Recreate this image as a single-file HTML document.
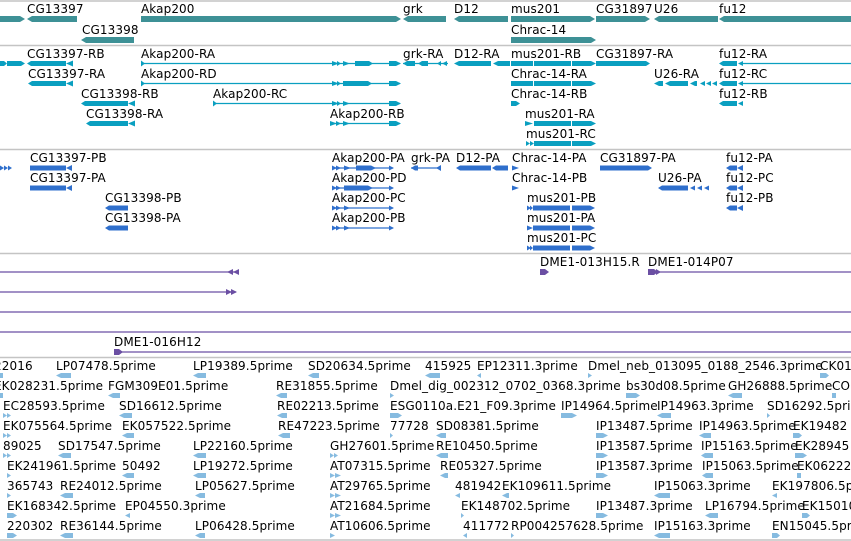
<!DOCTYPE html>
<html><head><meta charset="utf-8"><style>
html,body{margin:0;padding:0;background:#fff;width:851px;height:541px;overflow:hidden}
svg{display:block}
text{font-family:"DejaVu Sans","Liberation Sans",sans-serif;font-size:12px;letter-spacing:0.1px;fill:#000}
</style></head><body>
<svg width="851" height="541" viewBox="0 0 851 541" xmlns="http://www.w3.org/2000/svg">
<g stroke="#c4c4c4" stroke-width="1.5">
<line x1="0" y1="1" x2="851" y2="1"/><line x1="0" y1="45.5" x2="851" y2="45.5"/>
<line x1="0" y1="149.5" x2="851" y2="149.5"/><line x1="0" y1="253.5" x2="851" y2="253.5"/>
<line x1="0" y1="357.5" x2="851" y2="357.5"/><line x1="0" y1="540" x2="851" y2="540"/>
</g>

<g>
<text x="27" y="13">CG13397</text><text x="141" y="13">Akap200</text><text x="403" y="13">grk</text>
<text x="454" y="13">D12</text><text x="511" y="13">mus201</text><text x="596" y="13">CG31897</text>
<text x="654" y="13">U26</text><text x="719" y="13">fu12</text>
<text x="82" y="34">CG13398</text><text x="511" y="34">Chrac-14</text>
</g>
<g fill="#3e9196">
<polygon points="0,16 20,16 25,19 20,22 0,22"/>
<polygon points="27,19 32,16 77,16 77,22 32,22"/>
<polygon points="141,16 396,16 401,19 396,22 141,22"/>
<polygon points="403,19 408,16 446,16 446,22 408,22"/>
<polygon points="454,19 459,16 508,16 508,22 459,22"/>
<polygon points="511,16 590,16 595,19 590,22 511,22"/>
<polygon points="596,16 645,16 650,19 645,22 596,22"/>
<polygon points="654,19 659,16 718,16 718,22 659,22"/>
<polygon points="719,19 724,16 851,16 851,22 724,22"/>
<polygon points="81,40 86,37 134,37 134,43 86,43"/>
<polygon points="511,37 591,37 596,40 591,43 511,43"/>
</g>

<g>
<text x="27" y="58">CG13397-RB</text><text x="141" y="58">Akap200-RA</text><text x="403" y="58">grk-RA</text>
<text x="454" y="58">D12-RA</text><text x="511" y="58">mus201-RB</text><text x="596" y="58">CG31897-RA</text><text x="719" y="58">fu12-RA</text>
<text x="28" y="78">CG13397-RA</text><text x="141" y="78">Akap200-RD</text><text x="511" y="78">Chrac-14-RA</text><text x="654" y="78">U26-RA</text><text x="719" y="78">fu12-RC</text>
<text x="81" y="98">CG13398-RB</text><text x="213" y="98">Akap200-RC</text><text x="511" y="98">Chrac-14-RB</text><text x="719" y="98">fu12-RB</text>
<text x="86" y="118">CG13398-RA</text><text x="330" y="118">Akap200-RB</text><text x="525" y="118">mus201-RA</text>
<text x="526" y="138">mus201-RC</text>
</g>
<g stroke="#0a9fc0" stroke-width="1.2">
<line x1="141" y1="63.5" x2="400" y2="63.5"/><line x1="141" y1="83.5" x2="400" y2="83.5"/>
<line x1="213" y1="103.5" x2="400" y2="103.5"/><line x1="330" y1="123.5" x2="400" y2="123.5"/>
<line x1="403" y1="63.5" x2="448" y2="63.5"/>
<line x1="740" y1="63.5" x2="851" y2="63.5"/><line x1="740" y1="83.5" x2="851" y2="83.5"/>
</g>
<g fill="#0a9fc0">
<polygon points="0,61 4,61 7,63.5 4,66 0,66"/><polygon points="7,61 21,61 25,63.5 21,66 7,66"/>
<polygon points="27,63.5 31,61 66,61 66,66 31,66"/><polygon points="66,63.5 73,60.5 73,66.5"/>
<polygon points="141,60.5 145,63.5 141,66.5"/>
<polygon points="332,61 339,63.5 332,66 "/><polygon points="337,61 341,63.5 337,66"/><polygon points="343,61 350,63.5 343,66"/>
<polygon points="355,61 369,61 373,63.5 369,66 355,66"/><polygon points="389,61 396,61 401,63.5 396,66 389,66"/>
<polygon points="403,63.5 407,61 415,61 415,66 407,66"/><polygon points="418,63.5 422,61 428,61 428,66 422,66"/>
<polygon points="437,63.5 441,61 441,66"/><polygon points="442,63.5 447,61 447,66"/>
<polygon points="454,63.5 459,61 491,61 491,66 459,66"/><polygon points="493,63.5 498,61 510,61 510,66 498,66"/>
<rect x="511" y="61" width="22" height="5"/><rect x="534" y="61" width="37" height="5"/><polygon points="572,61 591,61 596,63.5 591,66 572,66"/>
<polygon points="596,61 646,61 650,63.5 646,66 596,66"/>
<polygon points="719,63.5 723,61 737,61 737,66 723,66"/><polygon points="738,63.5 743,61 743,66"/>
<polygon points="28,83.5 32,81 66,81 66,86 32,86"/><polygon points="66,83.5 73,80.5 73,86.5"/>
<polygon points="141,80.5 145,83.5 141,86.5"/>
<polygon points="332,81 339,83.5 332,86"/><polygon points="337,81 341,83.5 337,86"/>
<polygon points="343,81 368,81 372,83.5 368,86 343,86"/><polygon points="389,81 396,81 401,83.5 396,86 389,86"/>
<rect x="511" y="81" width="22" height="5"/><rect x="534" y="81" width="37" height="5"/><polygon points="572,81 591,81 596,83.5 591,86 572,86"/>
<polygon points="654,83.5 659,81 663,81 663,86 659,86"/><polygon points="665,83.5 670,81 688,81 688,86 670,86"/>
<polygon points="690,83.5 695,81 697,81 697,86 695,86"/><polygon points="700,83.5 705,81 705,86"/><polygon points="706,83.5 711,81 711,86"/><polygon points="712,83.5 717,81 717,86"/>
<polygon points="719,83.5 723,81 737,81 737,86 723,86"/><polygon points="738,83.5 743,81 743,86"/>
<polygon points="81,103.5 85,101 128,101 128,106 85,106"/><polygon points="128,103.5 135,100.5 135,106.5"/>
<polygon points="213,100.5 217,103.5 213,106.5"/>
<polygon points="332,101 339,103.5 332,106"/><polygon points="337,101 341,103.5 337,106"/><polygon points="343,101 350,103.5 343,106"/>
<polygon points="389,101 396,101 401,103.5 396,106 389,106"/>
<polygon points="511,101 516,101 520,103.5 516,106 511,106"/>
<polygon points="719,103.5 723,101 737,101 737,106 723,106"/><polygon points="738,103.5 743,101 743,106"/>
<polygon points="86,123.5 90,121 128,121 128,126 90,126"/><polygon points="128,123.5 135,120.5 135,126.5"/>
<polygon points="330,121 337,123.5 330,126"/><polygon points="336,121 341,123.5 336,126"/><polygon points="343,121 350,123.5 343,126"/>
<polygon points="389,121 396,121 401,123.5 396,126 389,126"/>
<polygon points="525,121 533,123.5 525,126"/><rect x="534" y="121" width="37" height="5"/><polygon points="572,121 591,121 596,123.5 591,126 572,126"/>
<polygon points="526,141 530,143.5 526,146"/><polygon points="530,141 534,143.5 530,146"/><rect x="534" y="141" width="37" height="5"/><polygon points="572,141 591,141 596,143.5 591,146 572,146"/>
</g>

<g>
<text x="30" y="162">CG13397-PB</text><text x="332" y="162">Akap200-PA</text><text x="411" y="162">grk-PA</text>
<text x="456" y="162">D12-PA</text><text x="512" y="162">Chrac-14-PA</text><text x="600" y="162">CG31897-PA</text><text x="726" y="162">fu12-PA</text>
<text x="30" y="182">CG13397-PA</text><text x="332" y="182">Akap200-PD</text><text x="512" y="182">Chrac-14-PB</text><text x="658" y="182">U26-PA</text><text x="726" y="182">fu12-PC</text>
<text x="105" y="202">CG13398-PB</text><text x="332" y="202">Akap200-PC</text><text x="527" y="202">mus201-PB</text><text x="726" y="202">fu12-PB</text>
<text x="105" y="222">CG13398-PA</text><text x="332" y="222">Akap200-PB</text><text x="527" y="222">mus201-PA</text>
<text x="527" y="242">mus201-PC</text>
</g>
<g stroke="#2f6fcc" stroke-width="1.2">
<line x1="332" y1="168" x2="393" y2="168"/><line x1="332" y1="188" x2="393" y2="188"/>
<line x1="332" y1="208" x2="393" y2="208"/><line x1="332" y1="228" x2="393" y2="228"/>
<line x1="411" y1="168" x2="440" y2="168"/>
</g>
<g fill="#2f6fcc">
<polygon points="0,165.5 4,168 0,170.5"/><polygon points="4,165.5 8,168 4,170.5"/><polygon points="8,165.5 12,168 8,170.5"/>
<polygon points="30,165.5 66,165.5 66,170.5 30,170.5"/><polygon points="66,168 72,165 72,171"/>
<polygon points="30,185.5 66,185.5 66,190.5 30,190.5"/><polygon points="66,188 72,185 72,191"/>
<polygon points="105,208 109,205.5 128,205.5 128,210.5 109,210.5"/>
<polygon points="105,228 109,225.5 128,225.5 128,230.5 109,230.5"/>
<polygon points="332,165.5 337,168 332,170.5"/><polygon points="336,165.5 341,168 336,170.5"/><polygon points="344,165.5 351,168 344,170.5"/>
<polygon points="356,165.5 371,165.5 376,168 371,170.5 356,170.5"/><polygon points="389,165.5 394,168 389,170.5"/>
<polygon points="332,185.5 337,188 332,190.5"/><polygon points="336,185.5 341,188 336,190.5"/>
<polygon points="344,185.5 368,185.5 373,188 368,190.5 344,190.5"/><polygon points="389,185.5 394,188 389,190.5"/>
<polygon points="332,205.5 337,208 332,210.5"/><polygon points="336,205.5 341,208 336,210.5"/><polygon points="344,205.5 350,208 344,210.5"/><polygon points="389,205.5 394,208 389,210.5"/>
<polygon points="332,225.5 337,228 332,230.5"/><polygon points="336,225.5 341,228 336,230.5"/><polygon points="344,225.5 350,228 344,230.5"/><polygon points="389,225.5 394,228 389,230.5"/>
<polygon points="411,168 415,165.5 418,165.5 418,170.5 415,170.5"/><polygon points="436,168 441,165 441,171"/>
<polygon points="456,168 460,165.5 491,165.5 491,170.5 460,170.5"/><polygon points="492,168 496,165.5 508,165.5 508,170.5 496,170.5"/>
<polygon points="512,165.5 519,168 512,170.5"/><polygon points="512,185.5 519,188 512,190.5"/>
<polygon points="600,165.5 648,165.5 652,168 648,170.5 600,170.5"/>
<polygon points="658,188 662,185.5 688,185.5 688,190.5 662,190.5"/><polygon points="690,188 695,185.5 695,190.5"/><polygon points="697,188 702,185.5 702,190.5"/><polygon points="704,188 709,185.5 709,190.5"/>
<polygon points="726,168 730,165.5 737,165.5 737,170.5 730,170.5"/><polygon points="737,168 743,165 743,171"/>
<polygon points="726,188 730,185.5 737,185.5 737,190.5 730,190.5"/><polygon points="737,188 743,185 743,191"/>
<polygon points="726,208 730,205.5 737,205.5 737,210.5 730,210.5"/><polygon points="737,208 743,205 743,211"/>
<polygon points="527,205.5 531,208 527,210.5"/><polygon points="530,205.5 533,208 530,210.5"/><rect x="533" y="205.5" width="37" height="5"/><polygon points="572,205.5 590,205.5 595,208 590,210.5 572,210.5"/>
<polygon points="527,225.5 533,228 527,230.5"/><rect x="533" y="225.5" width="37" height="5"/><polygon points="572,225.5 590,225.5 595,228 590,230.5 572,230.5"/>
<polygon points="527,245.5 531,248 527,250.5"/><polygon points="530,245.5 533,248 530,250.5"/><rect x="533" y="245.5" width="37" height="5"/><polygon points="572,245.5 590,245.5 595,248 590,250.5 572,250.5"/>
</g>

<g stroke="#6b4fa3" stroke-width="1.2">
<line x1="0" y1="272" x2="236" y2="272"/><line x1="0" y1="292" x2="236" y2="292"/>
<line x1="0" y1="312" x2="851" y2="312"/><line x1="0" y1="332" x2="851" y2="332"/>
<line x1="650" y1="272" x2="851" y2="272"/><line x1="114" y1="352" x2="851" y2="352"/>
</g>
<g fill="#6b4fa3">
<polygon points="227,272 233,269 233,275"/><polygon points="233,272 239,269 239,275"/>
<polygon points="226,289 232,292 226,295"/><polygon points="231,289 237,292 231,295"/>
<polygon points="540,269 545,269 549,272 545,275 540,275"/>
<polygon points="648,269 654,269 658,272 654,275 648,275"/><polygon points="656,269 661,272 656,275"/>
<polygon points="114,349 119,349 123,352 119,355 114,355"/>
</g>
<text x="540" y="266">DME1-013H15.R</text><text x="648" y="266">DME1-014P07</text>
<text x="114" y="346">DME1-016H12</text>

<g>
<text x="-6" y="370">22016</text><text x="56" y="370">LP07478.5prime</text><text x="193" y="370">LP19389.5prime</text><text x="308" y="370">SD20634.5prime</text><text x="425" y="370">415925</text><text x="477" y="370">EP12311.3prime</text><text x="588" y="370">Dmel_neb_013095_0188_2546.3prime</text><text x="820" y="370">CK01</text>
<text x="-6" y="390">EK028231.5prime</text><text x="108" y="390">FGM309E01.5prime</text><text x="276" y="390">RE31855.5prime</text><text x="390" y="390">Dmel_dig_002312_0702_0368.3prime</text><text x="626" y="390">bs30d08.5prime</text><text x="728" y="390">GH26888.5prime</text><text x="832" y="390">CO</text>
<text x="3" y="410">EC28593.5prime</text><text x="119" y="410">SD16612.5prime</text><text x="277" y="410">RE02213.5prime</text><text x="390" y="410">ESG0110a.E21_F09.3prime</text><text x="561" y="410">IP14964.5prime</text><text x="657" y="410">IP14963.3prime</text><text x="767" y="410">SD16292.5prime</text>
<text x="3" y="430">EK075564.5prime</text><text x="122" y="430">EK057522.5prime</text><text x="278" y="430">RE47223.5prime</text><text x="390" y="430">77728</text><text x="436" y="430">SD08381.5prime</text><text x="596" y="430">IP13487.5prime</text><text x="699" y="430">IP14963.5prime</text><text x="793" y="430">EK19482</text>
<text x="3" y="450">89025</text><text x="58" y="450">SD17547.5prime</text><text x="193" y="450">LP22160.5prime</text><text x="330" y="450">GH27601.5prime</text><text x="436" y="450">RE10450.5prime</text><text x="596" y="450">IP13587.5prime</text><text x="701" y="450">IP15163.5prime</text><text x="795" y="450">EK28945</text>
<text x="7" y="470">EK241961.5prime</text><text x="122" y="470">50492</text><text x="193" y="470">LP19272.5prime</text><text x="330" y="470">AT07315.5prime</text><text x="440" y="470">RE05327.5prime</text><text x="596" y="470">IP13587.3prime</text><text x="702" y="470">IP15063.5prime</text><text x="797" y="470">EK06222</text>
<text x="7" y="490">365743</text><text x="60" y="490">RE24012.5prime</text><text x="195" y="490">LP05627.5prime</text><text x="330" y="490">AT29765.5prime</text><text x="455" y="490">481942</text><text x="502" y="490">EK109611.5prime</text><text x="654" y="490">IP15063.3prime</text><text x="772" y="490">EK197806.5prime</text>
<text x="7" y="510">EK168342.5prime</text><text x="125" y="510">EP04550.3prime</text><text x="330" y="510">AT21684.5prime</text><text x="461" y="510">EK148702.5prime</text><text x="596" y="510">IP13487.3prime</text><text x="705" y="510">LP16794.5prime</text><text x="802" y="510">EK15010</text>
<text x="7" y="530">220302</text><text x="60" y="530">RE36144.5prime</text><text x="195" y="530">LP06428.5prime</text><text x="330" y="530">AT10606.5prime</text><text x="463" y="530">411772</text><text x="511" y="530">RP004257628.5prime</text><text x="654" y="530">IP15163.3prime</text><text x="772" y="530">EN15045.5prime</text>
</g>
<g fill="#86bbe0">
<rect x="0" y="373" width="3" height="5"/><polygon points="56,375.5 61,373 71,373 71,378 61,378"/><polygon points="193,375.5 198,373 206,373 206,378 198,378"/><polygon points="308,375.5 313,373 319,373 319,378 313,378"/><polygon points="425,375.5 430,373 440,373 440,378 430,378"/><polygon points="477,375.5 481,373 481,378"/><polygon points="588,373 592,375.5 588,378"/><polygon points="820,373 826,373 829,375.5 826,378 820,378"/>
<rect x="0" y="393" width="3" height="5"/><polygon points="108,395.5 113,393 120,393 120,398 113,398"/><polygon points="276,395.5 281,393 287,393 287,398 281,398"/><polygon points="390,393 394,395.5 390,398"/><polygon points="626,393 636,393 640,395.5 636,398 626,398"/><polygon points="728,395.5 733,393 742,393 742,398 733,398"/><rect x="832" y="393" width="4" height="5"/>
<polygon points="3,413 7,415.5 3,418"/><polygon points="7,413 11,415.5 7,418"/><polygon points="119,415.5 124,413 132,413 132,418 124,418"/><polygon points="277,415.5 282,413 287,413 287,418 282,418"/><polygon points="390,413 398,413 402,415.5 398,418 390,418"/><polygon points="561,413 572,413 577,415.5 572,418 561,418"/><polygon points="657,415.5 662,413 671,413 671,418 662,418"/><polygon points="767,413 770,415.5 767,418"/>
<polygon points="3,433 7,435.5 3,438"/><polygon points="7,433 11,435.5 7,438"/><polygon points="122,435.5 127,433 134,433 134,438 127,438"/><polygon points="278,435.5 283,433 290,433 290,438 283,438"/><polygon points="390,433 393,435.5 390,438"/><polygon points="436,435.5 441,433 446,433 446,438 441,438"/><polygon points="596,433 603,433 608,435.5 603,438 596,438"/><polygon points="699,435.5 704,433 711,433 711,438 704,438"/><polygon points="793,433 799,433 802,435.5 799,438 793,438"/>
<polygon points="3,453 7,455.5 3,458"/><polygon points="7,453 11,455.5 7,458"/><polygon points="58,455.5 63,453 71,453 71,458 63,458"/><polygon points="193,455.5 198,453 206,453 206,458 198,458"/><polygon points="330,453 334,455.5 330,458"/><polygon points="334,453 338,455.5 334,458"/><polygon points="436,455.5 441,453 448,453 448,458 441,458"/><polygon points="596,453 603,453 608,455.5 603,458 596,458"/><polygon points="701,455.5 705,453 713,453 713,458 705,458"/><polygon points="795,453 803,453 807,455.5 803,458 795,458"/>
<polygon points="7,473 11,475.5 7,478"/><polygon points="122,475.5 127,473 134,473 134,478 127,478"/><polygon points="193,475.5 198,473 206,473 206,478 198,478"/><polygon points="330,473 335,475.5 330,478"/><polygon points="335,473 341,475.5 335,478"/><polygon points="440,475.5 445,473 448,473 448,478 445,478"/><polygon points="596,473 603,473 608,475.5 603,478 596,478"/><polygon points="702,475.5 706,473 713,473 713,478 706,478"/><polygon points="797,473 801,473 801,478 797,478"/>
<polygon points="7,493 11,495.5 7,498"/><polygon points="60,495.5 65,493 73,493 73,498 65,498"/><polygon points="195,495.5 200,493 205,493 205,498 200,498"/><polygon points="330,493 335,495.5 330,498"/><polygon points="335,493 341,495.5 335,498"/><polygon points="455,495.5 460,493 460,498"/><polygon points="502,495.5 507,493 509,493 509,498 507,498"/><polygon points="654,495.5 659,493 670,493 670,498 659,498"/><polygon points="772,495.5 777,493 777,498"/>
<polygon points="7,513 13,513 17,515.5 13,518 7,518"/><polygon points="125,515.5 130,513 130,518"/><polygon points="330,513 335,515.5 330,518"/><polygon points="335,513 341,515.5 335,518"/><polygon points="461,513 464,515.5 461,518"/><polygon points="596,513 603,513 608,515.5 603,518 596,518"/><polygon points="705,515.5 710,513 718,513 718,518 710,518"/><polygon points="802,513 807,513 810,515.5 807,518 802,518"/>
<polygon points="7,533 13,533 17,535.5 13,538 7,538"/><polygon points="60,535.5 65,533 73,533 73,538 65,538"/><polygon points="195,535.5 200,533 205,533 205,538 200,538"/><polygon points="330,533 335,535.5 330,538"/><polygon points="463,535.5 467,533 467,538"/><polygon points="511,533 514,535.5 511,538"/><polygon points="654,535.5 659,533 670,533 670,538 659,538"/><polygon points="772,533 777,533 780,535.5 777,538 772,538"/>
</g>
</svg>
</body></html>
